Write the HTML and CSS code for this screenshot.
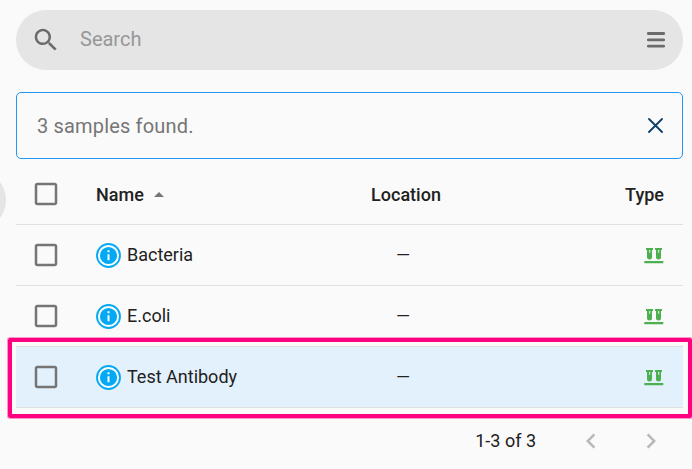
FILE: index.html
```html
<!DOCTYPE html>
<html lang="en">
<head>
    <meta charset="UTF-8">
    <meta name="viewport" content="width=device-width, initial-scale=1.0">
    <title>Samples</title>
    <link rel="stylesheet" href="styles.css">
</head>
<body>

    <svg class="sprite" aria-hidden="true">
        <symbol id="icon-checkbox" viewBox="0 0 24 24">
            <path d="M19 5v14H5V5h14m0-2H5c-1.1 0-2 .9-2 2v14c0 1.1.9 2 2 2h14c1.1 0 2-.9 2-2V5c0-1.1-.9-2-2-2z"/>
        </symbol>
        <symbol id="icon-info" viewBox="0 0 25 25">
            <circle cx="12.5" cy="12.5" r="11.5" fill="#fff" stroke="#03a9f4" stroke-width="1.9"/>
            <circle cx="12.5" cy="12.5" r="8.6" fill="#03a9f4"/>
            <path d="M11.500 11.300h2v6h-2zM11.500 7.300h2v2h-2z" fill="#fff"/>
        </symbol>
        <symbol id="icon-tubes" viewBox="0 0 20 16">
            <path d="M2 0h7v2H8v7a2.500 2.500 0 0 1-5 0V2H2zM11 0h7v2h-1v7a2.500 2.500 0 0 1-5 0V2h-1zM0.300 13.100h19v2.200h-19z"/>
            <path d="M5 2h1.300v2.800h-1.300zM14 2h1.300v2.800h-1.300z" fill="#fff" fill-opacity="0.7"/>
        </symbol>
    </svg>

    <div class="drawer-toggle"></div>

    <div class="search-bar">
        <svg class="icon" viewBox="0 0 24 24"><path d="M15.5 14h-.79l-.28-.27C15.41 12.59 16 11.11 16 9.500 16 5.910 13.090 3 9.500 3S3 5.910 3 9.500 5.910 16 9.500 16c1.610 0 3.090-.59 4.230-1.570l.27.28v.79l5 4.990L20.490 19l-4.990-5zm-6 0C7.010 14 5 11.990 5 9.500S7.010 5 9.500 5 14 7.010 14 9.500 11.990 14 9.500 14z"/></svg>
        <input class="search-input" type="text" placeholder="Search">
        <svg class="menu-icon" viewBox="0 0 18 16"><path d="M1.300 1.500h15.400M1.300 7.800h15.400M1.300 14.100h15.400"/></svg>
    </div>

    <div class="notice">
        <span>3 samples found.</span>
        <svg class="close-icon" viewBox="0 0 16 16"><path d="M1 1l13 13M14 1l-13 13"/></svg>
    </div>

    <div class="table">
        <div class="row head">
            <svg class="icon"><use href="#icon-checkbox"/></svg>
            <div class="name">Name <svg class="sort-icon" viewBox="0 0 10 5"><path d="M0 5l5-5 5 5z"/></svg></div>
            <div class="location">Location</div>
            <div class="type">Type</div>
        </div>
        <div class="row">
            <svg class="icon"><use href="#icon-checkbox"/></svg>
            <div class="name"><svg class="info-icon"><use href="#icon-info"/></svg><span class="label">Bacteria</span></div>
            <div class="location empty">—</div>
            <div class="type"><svg class="type-icon"><use href="#icon-tubes"/></svg></div>
        </div>
        <div class="row">
            <svg class="icon"><use href="#icon-checkbox"/></svg>
            <div class="name"><svg class="info-icon"><use href="#icon-info"/></svg><span class="label">E.coli</span></div>
            <div class="location empty">—</div>
            <div class="type"><svg class="type-icon"><use href="#icon-tubes"/></svg></div>
        </div>
        <div class="row selected">
            <svg class="icon"><use href="#icon-checkbox"/></svg>
            <div class="name"><svg class="info-icon"><use href="#icon-info"/></svg><span class="label">Test Antibody</span></div>
            <div class="location empty">—</div>
            <div class="type"><svg class="type-icon"><use href="#icon-tubes"/></svg></div>
            <div class="highlight"></div>
        </div>
    </div>

    <div class="pagination">
        <span>1-3 of 3</span>
        <svg class="icon prev" viewBox="0 0 24 24"><path d="M15.410 7.410L14 6l-6 6 6 6 1.410-1.410L10.830 12z"/></svg>
        <svg class="icon next" viewBox="0 0 24 24"><path d="M10 6L8.590 7.410 13.170 12l-4.580 4.590L10 18l6-6z"/></svg>
    </div>

</body>
</html>
```

FILE: styles.css
```css
* {
    box-sizing: border-box;
}

body {
    margin: 0;
    padding: 10px 9px 0 16px;
    height: 469px;
    overflow: hidden;
    background: #fafafa;
    color: #212121;
    font-family: Roboto, sans-serif;
    font-size: 18px;
}

svg {
    display: block;
    flex-shrink: 0;
}

.sprite {
    position: absolute;
    width: 0;
    height: 0;
}

.icon {
    width: 30px;
    height: 30px;
    fill: #757575;
}

/* edge of the round button that opens the side drawer */
.drawer-toggle {
    position: absolute;
    top: 170px;
    left: -54px;
    width: 60px;
    height: 60px;
    border-radius: 50%;
    background: #e5e5e5;
}

.search-bar {
    display: flex;
    align-items: center;
    height: 60px;
    padding: 0 18px 0 15px;
    border-radius: 30px;
    background: #e5e5e5;
}

.search-bar .icon {
    fill: #6b6b6b;
}

.search-input {
    flex: 1;
    margin: 0 0 0 19px;
    padding: 0 0 2px;
    border: none;
    outline: none;
    background: none;
    font: 20px Roboto, sans-serif;
}

.search-input::placeholder {
    color: #979797;
}

.menu-icon {
    width: 18px;
    height: 16px;
    fill: none;
    stroke: #6b6b6b;
    stroke-width: 2.8;
    stroke-linecap: round;
}

.notice {
    display: flex;
    align-items: center;
    justify-content: space-between;
    height: 67px;
    margin-top: 22px;
    padding: 0 19px 0 20px;
    border: 1px solid #2196f3;
    border-radius: 5px;
    color: #757575;
    font-size: 20px;
    letter-spacing: 0.17px;
}

.close-icon {
    width: 16px;
    height: 16px;
    margin-right: -1px;
    fill: none;
    stroke: #0f3e66;
    stroke-width: 1.8;
    stroke-linecap: round;
}

.table {
    margin-top: 5px;
}

.row {
    position: relative;
    display: grid;
    grid-template-columns: 80px 1fr 150px 207px;
    align-items: center;
    height: 61px;
    border-bottom: 1px solid #e0e0e0;
}

.row .icon {
    margin-left: 15px;
}

.head {
    font-weight: 500;
}

.name {
    display: flex;
    align-items: center;
}

.label {
    padding-bottom: 2px;
}

.sort-icon {
    width: 10px;
    height: 5px;
    margin-left: 10px;
    fill: #757575;
}

.info-icon {
    width: 25px;
    height: 25px;
    margin-right: 6px;
}

.location {
    width: 96px;
    margin-left: 32px;
    text-align: center;
}

.empty {
    margin-left: 29px;
    padding-bottom: 2px;
}

.type {
    display: flex;
    justify-content: flex-end;
    padding-right: 19px;
}

.type-icon {
    width: 20px;
    height: 16px;
    margin-top: 2px;
    fill: #4caf50;
}

.selected {
    background: #e3f1fd;
}

.highlight {
    position: absolute;
    top: -9px;
    right: -9px;
    bottom: -11px;
    left: -8px;
    border: 4px solid #ff0080;
    border-radius: 2px;
    box-shadow: 0 0 0 1px rgba(255, 0, 128, 0.4);
}

.pagination {
    display: flex;
    align-items: center;
    justify-content: flex-end;
    height: 65px;
    padding-right: 17px;
}

.pagination .icon {
    fill: #b8b8b8;
}

.prev {
    margin-left: 40px;
}

.next {
    margin-left: 30px;
}
```
